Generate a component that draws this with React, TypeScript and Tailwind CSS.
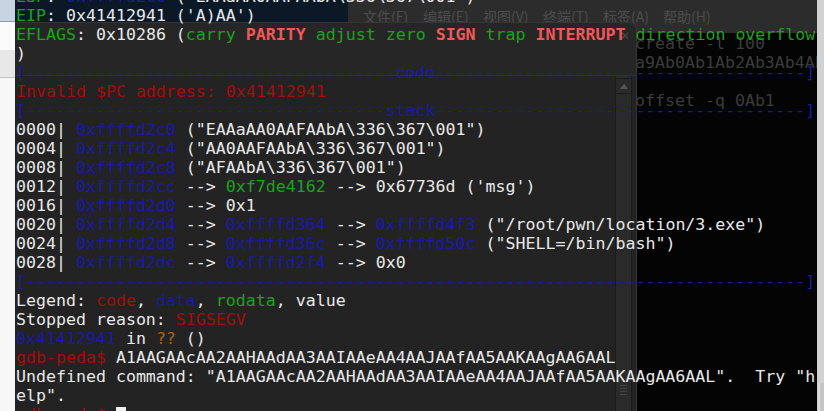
import React from 'react';

type Seg = [string, string];

const W = 'text-[#e8e8e8]';
const G = 'text-[#1ca21c]';
const R = 'text-[#f35656] font-bold';
const DR = 'text-[#a60c0c]';
const B = 'text-[#1a1aa8]';
const O = 'text-[#b85e00]';

const dash = (n: number) => '-'.repeat(n);

const lines: Seg[][] = [
  [[G, 'ESP'], [W, ': '], [B, '0xffffd2c0'], [W, ' ("EAAaAA0AAFAAbA\\336\\367\\001")']],
  [[G, 'EIP'], [W, ": 0x41412941 ('A)AA')"]],
  [
    [G, 'EFLAGS'],
    [W, ': 0x10286 ('],
    [G, 'carry '],
    [R, 'PARITY'],
    [G, ' adjust zero '],
    [R, 'SIGN'],
    [G, ' trap '],
    [R, 'INTERRUPT'],
    [G, ' direction overflow'],
  ],
  [[W, ')']],
  [[B, '[' + dash(37) + 'code' + dash(37) + ']']],
  [[DR, 'Invalid $PC address: 0x41412941']],
  [[B, '[' + dash(36) + 'stack' + dash(37) + ']']],
  [[W, '0000| '], [B, '0xffffd2c0'], [W, ' ("EAAaAA0AAFAAbA\\336\\367\\001")']],
  [[W, '0004| '], [B, '0xffffd2c4'], [W, ' ("AA0AAFAAbA\\336\\367\\001")']],
  [[W, '0008| '], [B, '0xffffd2c8'], [W, ' ("AFAAbA\\336\\367\\001")']],
  [[W, '0012| '], [B, '0xffffd2cc'], [W, ' --> '], [G, '0xf7de4162'], [W, " --> 0x67736d ('msg')"]],
  [[W, '0016| '], [B, '0xffffd2d0'], [W, ' --> 0x1']],
  [
    [W, '0020| '],
    [B, '0xffffd2d4'],
    [W, ' --> '],
    [B, '0xffffd364'],
    [W, ' --> '],
    [B, '0xffffd4f3'],
    [W, ' ("/root/pwn/location/3.exe")'],
  ],
  [
    [W, '0024| '],
    [B, '0xffffd2d8'],
    [W, ' --> '],
    [B, '0xffffd36c'],
    [W, ' --> '],
    [B, '0xffffd50c'],
    [W, ' ("SHELL=/bin/bash")'],
  ],
  [[W, '0028| '], [B, '0xffffd2dc'], [W, ' --> '], [B, '0xffffd2f4'], [W, ' --> 0x0']],
  [[B, '[' + dash(78) + ']']],
  [[W, 'Legend: '], [DR, 'code'], [W, ', '], [B, 'data'], [W, ', '], [G, 'rodata'], [W, ', value']],
  [[W, 'Stopped reason: '], [DR, 'SIGSEGV']],
  [[B, '0x41412941'], [W, ' in '], [O, '??'], [W, ' ()']],
  [[DR, 'gdb-peda$ '], [W, 'A1AAGAAcAA2AAHAAdAA3AAIAAeAA4AAJAAfAA5AAKAAgAA6AAL']],
  [[W, 'Undefined command: "A1AAGAAcAA2AAHAAdAA3AAIAAeAA4AAJAAfAA5AAKAAgAA6AAL".  Try "h']],
  [[W, 'elp".']],
];

const menu = ['文件(F)', '编辑(E)', '视图(V)', '终端(T)', '标签(A)', '帮助(H)'];

function LeftWindow() {
  return (
    <div className="w-[15px] h-full flex flex-col shrink-0">
      <div className="h-[21px] bg-[#c8d4e2]" />
      <div className="h-[1px] bg-[#8d9aaa]" />
      <div className="h-[28px] bg-[#fbfbfb]" />
      <div className="h-[27px] bg-[#e8e8e8]" />
      <div className="h-[1px] bg-[#c2c2c2]" />
      <div className="flex-1 bg-[#f7f7f7]" />
    </div>
  );
}

function Backdrop() {
  return (
    <>
      {/* navy window strip */}
      <div className="absolute left-0 top-0 w-[333px] h-[22px] bg-[#0b1826]" />
      {/* behind terminal menu bar */}
      <div className="absolute left-[333px] top-0 right-0 h-[33px] bg-[#2c2c2c] flex items-center pl-[15px] font-['Noto_Sans_CJK_SC',sans-serif] text-[14px] text-[#4c4c4c]">
        {menu.map((m) => (
          <span key={m} className="w-[60px] shrink-0 whitespace-nowrap">
            {m}
          </span>
        ))}
      </div>
      {/* behind terminal content */}
      <div className="absolute left-[621px] top-[33px] right-0 bottom-0 bg-[#040404] overflow-hidden">
        <pre className="mt-[1px] -ml-[1px] font-['DejaVu_Sans_Mono',monospace] text-[16.6px] leading-[19px] text-[#3b3b3b]">
          {'create -l 100\na9Ab0Ab1Ab2Ab3Ab4Ab\n\noffset -q 0Ab1'}
        </pre>
      </div>
      {/* dialog window */}
      <div className="absolute left-0 top-[22px] w-[622px] bottom-0 bg-[#262626] border-t border-r border-[#363636] rounded-tr-[7px] flex flex-col">
        <div className="h-[52px] relative">
          <span className="absolute right-[6px] top-[4px] text-[12px] text-[#4a4a4a] font-['DejaVu_Sans',sans-serif]">✕</span>
        </div>
        <div className="flex-1 flex border-t border-[#323232] bg-[#232323]">
          <div className="flex-1" />
          <div className="w-[17px] flex flex-col border-l border-r border-[#1b1b1b] bg-[#2a2a2a]">
            <div className="h-[16px] mt-[2px] border-y border-[#1b1b1b] flex items-center justify-center">
              <div className="w-0 h-0 border-l-[4px] border-r-[4px] border-b-[5px] border-l-transparent border-r-transparent border-b-[#555555]" />
            </div>
            <div className="flex-1" />
            <div className="flex flex-col items-center gap-[2px] mb-[16px]">
              <div className="w-[7px] h-[1px] bg-[#444444]" />
              <div className="w-[7px] h-[1px] bg-[#444444]" />
              <div className="w-[7px] h-[1px] bg-[#444444]" />
              <div className="w-[7px] h-[1px] bg-[#444444]" />
            </div>
          </div>
          <div className="w-[4px]" />
        </div>
      </div>
    </>
  );
}

function Terminal() {
  return (
    <div className="relative flex-1 h-full overflow-hidden">
      <Backdrop />
      <div className="relative z-10 -mt-[13px] pl-[1px] font-['DejaVu_Sans_Mono',monospace] text-[16.6px] leading-[19px] whitespace-pre">
        {lines.map((segs, i) => (
          <div key={i} className="h-[19px]">
            {segs.map(([cls, t], j) => (
              <span key={j} className={cls}>
                {t}
              </span>
            ))}
          </div>
        ))}
        <div className="h-[19px] flex items-center">
          <span className={DR}>gdb-peda$ </span>
          <span className="inline-block w-[10px] h-[16px] bg-[#f0f0f0]" />
        </div>
      </div>
    </div>
  );
}

export default function App() {
  return (
    <div className="w-[824px] h-[411px] overflow-hidden flex bg-[#262626]">
      <LeftWindow />
      <Terminal />
      <div className="w-[7px] h-full shrink-0 flex flex-col bg-[#d2d2d2]">
        <div className="flex-1" />
        <div className="h-[28px] ml-[2px] bg-[#c4c4c4] border-l border-[#e2e2e2]" />
      </div>
    </div>
  );
}
